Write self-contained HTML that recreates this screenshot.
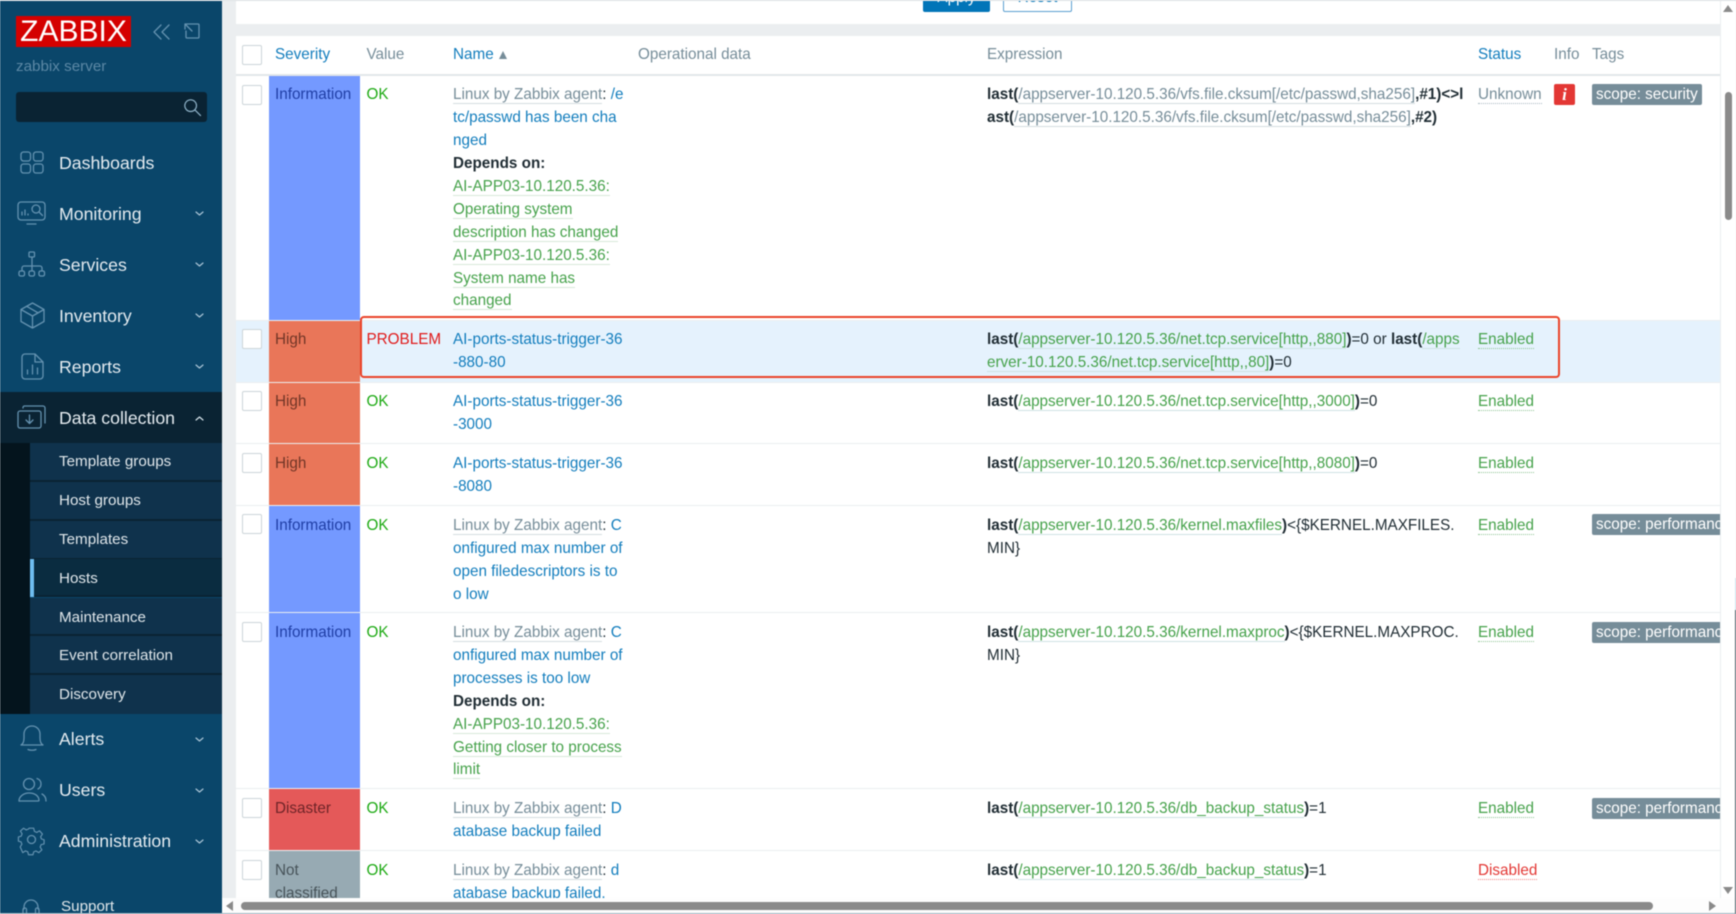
<!DOCTYPE html>
<html lang="en"><head><meta charset="utf-8"><title>Triggers</title>
<style>
html,body{margin:0;padding:0;width:1736px;height:914px;overflow:hidden;background:#ebeef0}
body{font-family:"Liberation Sans",Arial,sans-serif;position:relative;filter:blur(.4px)}
.a{position:absolute;white-space:nowrap}
#side{position:absolute;left:0;top:0;width:222px;height:914px;background:#0a466a;overflow:hidden}
.m{position:absolute;left:59px;color:#e4ebf0;font-size:17.7px;line-height:24px;white-space:nowrap}
.s{position:absolute;left:59px;color:#dfe6ea;font-size:15.2px;line-height:20px;margin-top:1px;white-space:nowrap}
svg{position:absolute;overflow:visible;fill:none;stroke:#6492b0;stroke-width:1.3;stroke-linecap:round;stroke-linejoin:round}
.sub{position:absolute;left:30px;width:192px;height:37px;background:#0f324c;border-bottom:2px solid #0a2333}
#tbl{position:absolute;left:236px;top:0;width:1484px;height:898px;overflow:hidden;background:#fff;font-size:15.25px;line-height:22.9px;color:#1f2c33}
.rl{position:absolute;left:0;width:1484px;height:1px;background:#ebeef0}
.sev{position:absolute;left:33px;width:91px}
.cb{position:absolute;left:6px;width:18px;height:18px;border:1px solid #ccd5d9;border-radius:2px;background:#fff}
.c{position:absolute;white-space:nowrap;margin-top:2px}
.r1{margin-top:1.800px}
.hd{margin-top:1.200px}
.h{color:#768d99}.l{color:#127dbd}
.hl{color:#768d99;border-bottom:1px solid #d5dde1}
.g{color:#46a24b;border-bottom:1px solid #d8e9d9}
.x{color:#768d99;border-bottom:1px solid #d5dde1}
.xg{color:#46a24b;border-bottom:1px solid #cfe2e4}
.ok{color:#1eaa14}.pr{color:#e01b1b}
.en{color:#46a24b;border-bottom:1px dotted #8ec492}
.un{color:#768d99;border-bottom:1px dotted #a8b8c0}
.di{color:#e33734;border-bottom:1px dotted #ee8583}
.tag{position:absolute;left:1356px;height:21px;line-height:22px;padding:0 4px;background:#768d99;color:#fff;border-radius:2px;white-space:nowrap}
b{font-weight:bold}
</style></head><body>

<div id="side">
<div class="a" style="left:16px;top:16px;width:115px;height:31px;background:#d40000;color:#fff;font-size:30px;line-height:31px;text-align:center">ZABBIX</div>
<svg style="left:153px;top:24px" width="18" height="16" viewBox="0 0 18 16"><path d="M8 1 1 8l7 7M16 1 9 8l7 7"/></svg>
<svg style="left:184px;top:23px" width="16" height="16" viewBox="0 0 16 16"><path d="M6 1h8a1 1 0 0 1 1 1v12a1 1 0 0 1-1 1H3a1 1 0 0 1-1-1V8M1 1l7 7M1 1v5M1 1h5"/></svg>
<div class="a" style="left:16px;top:57px;font-size:15.2px;line-height:20px;color:#5c88a5">zabbix server</div>
<div class="a" style="left:16px;top:92px;width:191px;height:30px;background:#0a2333;border-radius:3px"></div>
<svg style="left:183px;top:98px" width="18" height="18" viewBox="0 0 20 20"><circle cx="8.500" cy="8.500" r="6.500" stroke="#8fb3c9"/><path d="m13.500 13.500 6 6" stroke="#8fb3c9"/></svg>

<svg style="left:20px;top:151px" width="24" height="23" viewBox="0 0 24 23"><rect x="1" y="1" width="9.500" height="9" rx="2.500"/><rect x="13.500" y="1" width="9.500" height="9" rx="2.500"/><rect x="1" y="13" width="9.500" height="9" rx="2.500"/><rect x="13.500" y="13" width="9.500" height="9" rx="2.500"/></svg>
<div class="m" style="top:151px">Dashboards</div>

<svg style="left:17px;top:201px" width="29" height="24" viewBox="0 0 29 24"><rect x="1" y="1" width="27" height="18" rx="3"/><path d="M10 23h9M5 14v-3M8 14V9M11 14v-1"/><circle cx="19" cy="8" r="4"/><path d="m22 11 3.500 3.500"/></svg>
<div class="m" style="top:202px">Monitoring</div>

<svg style="left:18px;top:251px" width="28" height="26" viewBox="0 0 28 26"><rect x="11" y="1" width="5.500" height="5" rx="1"/><path d="M14 6v9M4 19v-2a2 2 0 0 1 2-2h16a2 2 0 0 1 2 2v2"/><rect x="1" y="20" width="5.500" height="5" rx="1.500"/><rect x="11" y="20" width="5.500" height="5" rx="1.500"/><rect x="21" y="20" width="5.500" height="5" rx="1.500"/><path d="M14 15v4"/></svg>
<div class="m" style="top:253px">Services</div>

<svg style="left:20px;top:302px" width="25" height="27" viewBox="0 0 25 27"><path d="M12.500 1 24 7.500v12L12.500 26 1 19.500v-12zM1 7.500l11.500 6.500L24 7.500M12.500 14v12M6.500 4.200 18 10.800"/></svg>
<div class="m" style="top:304px">Inventory</div>

<svg style="left:21px;top:353px" width="23" height="27" viewBox="0 0 23 27"><path d="M14 1H4a3 3 0 0 0-3 3v19a3 3 0 0 0 3 3h15a3 3 0 0 0 3-3V9zM14 1v8h8M6.500 21v-4M11.500 21v-9M16.500 21v-6"/></svg>
<div class="m" style="top:355px">Reports</div>

<div class="a" style="left:0;top:392px;width:222px;height:51px;background:#0a2333"></div>
<svg style="left:17px;top:405px" width="30" height="24" viewBox="0 0 30 24"><rect x="1" y="6" width="23" height="17" rx="2"/><path d="M6 3V2.500A1.500 1.500 0 0 1 7.500 1H26a2 2 0 0 1 2 2v15M12.500 10v8M9 15l3.500 3.500L16 15" /></svg>
<div class="m" style="top:406px">Data collection</div>

<div class="a" style="left:0;top:443px;width:30px;height:271px;background:#04141d"></div>
<div class="sub" style="top:443px;height:37px"></div>
<div class="sub" style="top:482px;height:37px"></div>
<div class="sub" style="top:521px;height:37px"></div>
<div class="sub" style="top:559px;height:36px;background:#0a2c40"></div>
<div class="sub" style="top:598px;height:36px"></div>
<div class="sub" style="top:636px;height:37px"></div>
<div class="sub" style="top:675px;height:39px;border:0"></div>
<div class="a" style="left:30px;top:559px;width:4px;height:38px;background:#6fbdf0"></div>
<div class="s" style="top:451px">Template groups</div>
<div class="s" style="top:490px">Host groups</div>
<div class="s" style="top:529px">Templates</div>
<div class="s" style="top:568px">Hosts</div>
<div class="s" style="top:606.500px">Maintenance</div>
<div class="s" style="top:645px">Event correlation</div>
<div class="s" style="top:684px">Discovery</div>

<svg style="left:20px;top:725px" width="24" height="26" viewBox="0 0 24 26"><path d="M1 20c2-1 3-3 3-7V9a8 8 0 0 1 16 0v4c0 4 1 6 3 7zM8 24.500c2 1 6 1 8 0"/></svg>
<div class="m" style="top:727px">Alerts</div>

<svg style="left:18px;top:777px" width="29" height="26" viewBox="0 0 29 26"><circle cx="11" cy="7" r="5.500"/><path d="M1 24c0-4 4-8 10-8s10 3 10 7.500a1 1 0 0 1-1 .5H2a1 1 0 0 1-1 0zM19 1.500c3 1 4 3 4 5.500s-1 4-3 5M24 17c2 1 4 3 4 7"/></svg>
<div class="m" style="top:778px">Users</div>

<svg style="left:18px;top:826px" width="27" height="27" viewBox="0 0 27 27"><circle cx="13.500" cy="13.500" r="4"/><path d="M11 1h5l.8 3.500 2.700 1.200 3-1.800 3.200 3.600-2 3 .9 2.500 3 .9-.1 4.600-3.300.8-1 2.700 1.900 3-3.500 3.200-3-1.900-2.600 1-.8 3.200h-5l-.8-3.300-2.600-1-3 1.900L1 21.800l1.900-3-1-2.700L-1 15.400v-4.700l3.100-.8 1-2.700-1.900-3 3.500-3.200 3 1.900 2.500-1z" transform="translate(1.300 1.300) scale(.9)"/></svg>
<div class="m" style="top:829px">Administration</div>

<svg style="left:22px;top:898px" width="18" height="18" viewBox="0 0 18 18"><path d="M2 11V9a7 7 0 0 1 14 0v2"/><rect x="1" y="10" width="3.500" height="7" rx="1.500"/><rect x="13.500" y="10" width="3.500" height="7" rx="1.500"/></svg>
<div class="a" style="left:61px;top:897px;font-size:15.2px;line-height:20px;color:#dfe6ea">Support</div>

<svg style="left:195px;top:211px" width="9" height="5" viewBox="0 0 9 5" ><path d="m1 1 3.500 3L8 1" stroke="#a9c4d6" stroke-width="1.200"/></svg>
<svg style="left:195px;top:262px" width="9" height="5" viewBox="0 0 9 5"><path d="m1 1 3.500 3L8 1" stroke="#a9c4d6" stroke-width="1.200"/></svg>
<svg style="left:195px;top:313px" width="9" height="5" viewBox="0 0 9 5"><path d="m1 1 3.500 3L8 1" stroke="#a9c4d6" stroke-width="1.200"/></svg>
<svg style="left:195px;top:364px" width="9" height="5" viewBox="0 0 9 5"><path d="m1 1 3.500 3L8 1" stroke="#a9c4d6" stroke-width="1.200"/></svg>
<svg style="left:195px;top:416px" width="9" height="5" viewBox="0 0 9 5"><path d="m1 4 3.500-3L8 4" stroke="#d5e2ea" stroke-width="1.200"/></svg>
<svg style="left:195px;top:737px" width="9" height="5" viewBox="0 0 9 5"><path d="m1 1 3.500 3L8 1" stroke="#a9c4d6" stroke-width="1.200"/></svg>
<svg style="left:195px;top:788px" width="9" height="5" viewBox="0 0 9 5"><path d="m1 1 3.500 3L8 1" stroke="#a9c4d6" stroke-width="1.200"/></svg>
<svg style="left:195px;top:839px" width="9" height="5" viewBox="0 0 9 5"><path d="m1 1 3.500 3L8 1" stroke="#a9c4d6" stroke-width="1.200"/></svg>
</div>

<div id="tbl">
<div class="a" style="left:0;top:0;width:1484px;height:1px;background:#e3e6e8"></div>
<div class="a" style="left:687px;top:-13px;width:67px;height:25px;background:#0275b8;border-radius:2px;color:#fff;text-align:center;line-height:22px">Apply</div>
<div class="a" style="left:767px;top:-13px;width:67px;height:23px;border:1px solid #5a9fd0;border-radius:2px;color:#0275b8;text-align:center;line-height:20px">Reset</div>
<div class="a" style="left:0;top:24px;width:1484px;height:12px;background:#ebeef0"></div>
<div class="a" style="left:0;top:74px;width:1484px;height:2px;background:#e3e7e9"></div>

<!-- header -->
<div class="cb" style="top:45px"></div>
<div class="c hd" style="left:39px;top:42.500px"><span class="l">Severity</span></div>
<div class="c h hd" style="left:130.500px;top:42.500px">Value</div>
<div class="c hd" style="left:217px;top:42.500px"><span class="l">Name</span></div>
<div class="a" style="left:262.500px;top:51px;width:0;height:0;border-left:4.500px solid transparent;border-right:4.500px solid transparent;border-bottom:8px solid #768d99"></div>
<div class="c h hd" style="left:402px;top:42.500px">Operational data</div>
<div class="c h hd" style="left:751px;top:42.500px">Expression</div>
<div class="c hd" style="left:1242px;top:42.500px"><span class="l">Status</span></div>
<div class="c h hd" style="left:1318px;top:42.500px">Info</div>
<div class="c h hd" style="left:1356px;top:42.500px">Tags</div>

<!-- row backgrounds -->
<div class="a" style="left:0;top:320px;width:1484px;height:62px;background:#e5f2fd"></div>
<div class="rl" style="top:320px"></div><div class="rl" style="top:382px"></div><div class="rl" style="top:443px"></div><div class="rl" style="top:505px"></div><div class="rl" style="top:612px"></div><div class="rl" style="top:788px"></div><div class="rl" style="top:850px"></div>

<!-- severity -->
<div class="sev" style="top:76px;height:244px;background:#7499ff"></div>
<div class="sev" style="top:320.500px;height:61px;background:#e97659"></div>
<div class="sev" style="top:382.500px;height:60.500px;background:#e97659"></div>
<div class="sev" style="top:444px;height:61px;background:#e97659"></div>
<div class="sev" style="top:505.500px;height:106.500px;background:#7499ff"></div>
<div class="sev" style="top:613px;height:175px;background:#7499ff"></div>
<div class="sev" style="top:789px;height:61px;background:#e45959"></div>
<div class="sev" style="top:851px;height:60px;background:#97aab3"></div>

<!-- checkboxes -->
<div class="cb" style="top:85px"></div><div class="cb" style="top:329px"></div><div class="cb" style="top:391px"></div><div class="cb" style="top:453px"></div><div class="cb" style="top:514px"></div><div class="cb" style="top:622px"></div><div class="cb" style="top:798px"></div><div class="cb" style="top:860px"></div>

<!-- severity text -->
<div class="c r1" style="left:39px;top:82.500px;color:#1f3ea5">Information</div>
<div class="c" style="left:39px;top:327.500px;color:#703526;margin-top:1.500px">High</div>
<div class="c" style="left:39px;top:389px;color:#703526">High</div>
<div class="c" style="left:39px;top:450.800px;color:#703526">High</div>
<div class="c" style="left:39px;top:512.800px;color:#1f3ea5">Information</div>
<div class="c" style="left:39px;top:620px;color:#1f3ea5">Information</div>
<div class="c" style="left:39px;top:796px;color:#6e2428">Disaster</div>
<div class="c" style="left:39px;top:857.800px;color:#475359">Not<br>classified</div>

<!-- value -->
<div class="c ok r1" style="left:130.500px;top:82.500px">OK</div>
<div class="c pr" style="left:130.500px;top:327.500px;margin-top:1.500px">PROBLEM</div>
<div class="c ok" style="left:130.500px;top:389px">OK</div>
<div class="c ok" style="left:130.500px;top:450.800px">OK</div>
<div class="c ok" style="left:130.500px;top:512.800px">OK</div>
<div class="c ok" style="left:130.500px;top:620px">OK</div>
<div class="c ok" style="left:130.500px;top:796px">OK</div>
<div class="c ok" style="left:130.500px;top:857.800px">OK</div>

<!-- name -->
<div class="c r1" style="left:217px;top:82.500px"><span class="hl">Linux by Zabbix agent</span>: <span class="l">/e</span><br><span class="l">tc/passwd has been cha</span><br><span class="l">nged</span><br><b>Depends on:</b><br><span class="g">AI-APP03-10.120.5.36:</span><br><span class="g">Operating system</span><br><span class="g">description has changed</span><br><span class="g">AI-APP03-10.120.5.36:</span><br><span class="g">System name has</span><br><span class="g">changed</span></div>
<div class="c l" style="left:217px;top:327.500px;margin-top:1.500px">AI-ports-status-trigger-36<br>-880-80</div>
<div class="c l" style="left:217px;top:389px">AI-ports-status-trigger-36<br>-3000</div>
<div class="c l" style="left:217px;top:450.800px">AI-ports-status-trigger-36<br>-8080</div>
<div class="c" style="left:217px;top:512.800px"><span class="hl">Linux by Zabbix agent</span>: <span class="l">C</span><br><span class="l">onfigured max number of</span><br><span class="l">open filedescriptors is to</span><br><span class="l">o low</span></div>
<div class="c" style="left:217px;top:620px"><span class="hl">Linux by Zabbix agent</span>: <span class="l">C</span><br><span class="l">onfigured max number of</span><br><span class="l">processes is too low</span><br><b>Depends on:</b><br><span class="g">AI-APP03-10.120.5.36:</span><br><span class="g">Getting closer to process</span><br><span class="g">limit</span></div>
<div class="c" style="left:217px;top:796px"><span class="hl">Linux by Zabbix agent</span>: <span class="l">D</span><br><span class="l">atabase backup failed</span></div>
<div class="c" style="left:217px;top:857.800px"><span class="hl">Linux by Zabbix agent</span>: <span class="l">d</span><br><span class="l">atabase backup failed.</span></div>

<!-- expression -->
<div class="c r1" style="left:751px;top:82.500px"><b>last(</b><span class="x">/appserver-10.120.5.36/vfs.file.cksum[/etc/passwd,sha256]</span><b>,#1)&lt;&gt;l</b><br><b>ast(</b><span class="x">/appserver-10.120.5.36/vfs.file.cksum[/etc/passwd,sha256]</span><b>,#2)</b></div>
<div class="c" style="left:751px;top:327.500px;margin-top:1.500px"><b>last(</b><span class="xg">/appserver-10.120.5.36/net.tcp.service[http,,880]</span><b>)</b>=0 or <b>last(</b><span class="xg">/apps</span><br><span class="xg">erver-10.120.5.36/net.tcp.service[http,,80]</span><b>)</b>=0</div>
<div class="c" style="left:751px;top:389px"><b>last(</b><span class="xg">/appserver-10.120.5.36/net.tcp.service[http,,3000]</span><b>)</b>=0</div>
<div class="c" style="left:751px;top:450.800px"><b>last(</b><span class="xg">/appserver-10.120.5.36/net.tcp.service[http,,8080]</span><b>)</b>=0</div>
<div class="c" style="left:751px;top:512.800px"><b>last(</b><span class="xg">/appserver-10.120.5.36/kernel.maxfiles</span><b>)</b>&lt;{$KERNEL.MAXFILES.<br>MIN}</div>
<div class="c" style="left:751px;top:620px"><b>last(</b><span class="xg">/appserver-10.120.5.36/kernel.maxproc</span><b>)</b>&lt;{$KERNEL.MAXPROC.<br>MIN}</div>
<div class="c" style="left:751px;top:796px"><b>last(</b><span class="xg">/appserver-10.120.5.36/db_backup_status</span><b>)</b>=1</div>
<div class="c" style="left:751px;top:857.800px"><b>last(</b><span class="xg">/appserver-10.120.5.36/db_backup_status</span><b>)</b>=1</div>

<!-- status -->
<div class="c r1" style="left:1242px;top:82.500px"><span class="un">Unknown</span></div>
<div class="c" style="left:1242px;top:327.500px;margin-top:1.500px"><span class="en">Enabled</span></div>
<div class="c" style="left:1242px;top:389px"><span class="en">Enabled</span></div>
<div class="c" style="left:1242px;top:450.800px"><span class="en">Enabled</span></div>
<div class="c" style="left:1242px;top:512.800px"><span class="en">Enabled</span></div>
<div class="c" style="left:1242px;top:620px"><span class="en">Enabled</span></div>
<div class="c" style="left:1242px;top:796px"><span class="en">Enabled</span></div>
<div class="c" style="left:1242px;top:857.800px"><span class="di">Disabled</span></div>

<!-- info -->
<div class="a" style="left:1318px;top:84px;width:21px;height:21px;background:#e33734;border-radius:2px;color:#fff;text-align:center;line-height:21px;font-family:'Liberation Serif',serif;font-weight:bold;font-style:italic;font-size:17px">i</div>

<!-- tags -->
<div class="tag" style="top:84px;width:102px">scope: security</div>
<div class="tag" style="top:514px">scope: performance</div>
<div class="tag" style="top:622px">scope: performance</div>
<div class="tag" style="top:798px">scope: performance</div>

<!-- highlight -->
<div class="a" style="left:124px;top:316px;width:1196px;height:58px;border:2px solid #ea4329;border-radius:4px"></div>
</div>

<!-- scrollbars -->
<div class="a" style="left:1721px;top:0;width:15px;height:914px;background:#fff"></div>
<div class="a" style="left:222px;top:898px;width:1514px;height:16px;background:#fdfdfd"></div>
<div class="a" style="left:1725px;top:92px;width:7px;height:128px;background:#8a8a8a;border-radius:4px"></div>
<div class="a" style="left:1723px;top:5px;width:0;height:0;border-left:5px solid transparent;border-right:5px solid transparent;border-bottom:7px solid #8a8a8a"></div>
<div class="a" style="left:1723px;top:887px;width:0;height:0;border-left:5px solid transparent;border-right:5px solid transparent;border-top:7px solid #8a8a8a"></div>
<div class="a" style="left:241px;top:902px;width:1412px;height:8px;background:#8a8a8a;border-radius:4px"></div>
<div class="a" style="left:226px;top:901px;width:0;height:0;border-top:5px solid transparent;border-bottom:5px solid transparent;border-right:7px solid #8a8a8a"></div>
<div class="a" style="left:1709px;top:901px;width:0;height:0;border-top:5px solid transparent;border-bottom:5px solid transparent;border-left:7px solid #8a8a8a"></div>
<div class="a" style="left:0;top:913px;width:1736px;height:1px;background:#9fb3bf"></div>
<div class="a" style="left:0;top:0;width:1736px;height:1px;background:#dfe3e5"></div>
<div class="a" style="left:1735px;top:578px;width:1px;height:32px;background:#cfe6ee"></div>
<div class="a" style="left:1735px;top:610px;width:1px;height:304px;background:#4a5a63"></div>
</body></html>
